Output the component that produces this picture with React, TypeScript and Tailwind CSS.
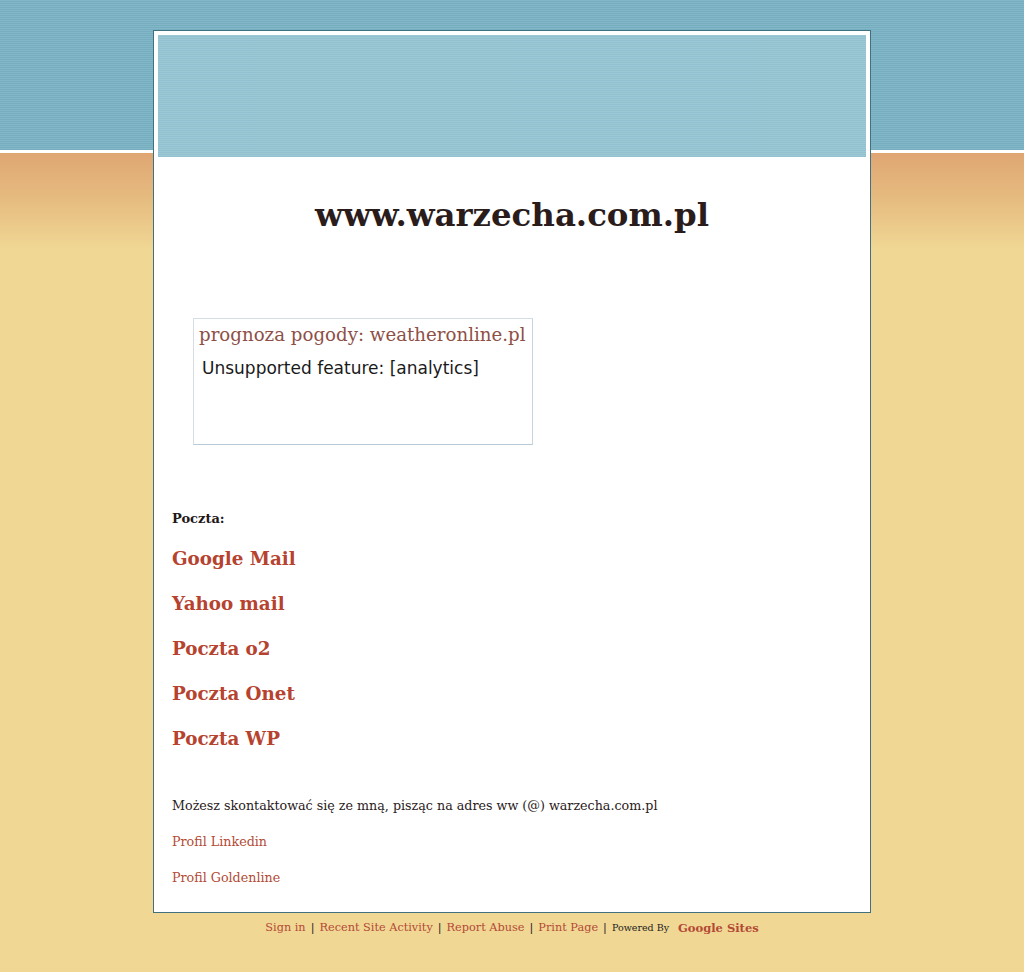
import React from "react";

const serif = { fontFamily: '"DejaVu Serif", "Liberation Serif", serif' };
const sans = { fontFamily: '"DejaVu Sans", "Liberation Sans", sans-serif' };

export default function App() {
  const mails = ["Google Mail", "Yahoo mail", "Poczta o2", "Poczta Onet", "Poczta WP"];
  return (
    <div
      className="min-h-[972px] w-full bg-[linear-gradient(to_bottom,#7ab3c5_0px,#7ab3c5_150px,#ffffff_150px,#ffffff_153px,#dfa673_153px,#e6bc80_200px,#f0d794_250px,#f0d794_100%)] pt-[30px]"
      style={serif}
    >
      <div className="relative">
        <div className="pointer-events-none absolute inset-x-0 top-[-30px] h-[150px] bg-[repeating-linear-gradient(to_bottom,rgba(255,255,255,0.06)_0px,rgba(255,255,255,0.06)_1px,rgba(0,0,0,0.03)_1px,rgba(0,0,0,0.03)_2px)]" />
        <div className="relative mx-auto w-[718px] border border-[#3f7180] bg-white px-[4px] pt-[4px]">
          <div className="h-[122px] bg-[#95c4d2] bg-[repeating-linear-gradient(to_bottom,rgba(255,255,255,0.08)_0px,rgba(255,255,255,0.08)_1px,rgba(0,0,0,0.02)_1px,rgba(0,0,0,0.02)_2px)]" />
          <h1 className="mt-[38px] text-center text-[32.4px] font-bold leading-[40px] text-[#2b1c1c]">
            www.warzecha.com.pl
          </h1>
          <div className="mt-[83px] ml-[35px] w-[340px] h-[127px] border border-[#d7dee3] border-b-[#b9cad6] border-r-[#c9d5de] px-[5px]">
            <div className="mt-[4px] whitespace-nowrap text-[18.2px] leading-[24px] text-[#8e4f47]">
              prognoza pogody: weatheronline.pl
            </div>
            <div className="mt-[11px] pl-[3px] text-[17px] leading-[20px] text-[#1a1a1a]" style={sans}>
              Unsupported feature: [analytics]
            </div>
          </div>
          <div className="px-[14px]">
            <div className="mt-[66px] text-[13px] font-bold leading-[16px] text-[#221818]">Poczta:</div>
            <div className="mt-[20px] flex flex-col gap-[21px]">
              {mails.map((m) => (
                <a key={m} className="text-[18.3px] font-bold leading-[24px] text-[#b6432f]">
                  {m}
                </a>
              ))}
            </div>
            <div className="mt-[46px] text-[12.7px] leading-[18px] text-[#2a2020]">
              Możesz skontaktować się ze mną, pisząc na adres ww (@) warzecha.com.pl
            </div>
            <div className="mt-[18px] text-[12.7px] leading-[18px] text-[#b34a36]">Profil Linkedin</div>
            <div className="mt-[18px] text-[12.7px] leading-[18px] text-[#b34a36]">Profil Goldenline</div>
            <div className="h-[25px]" />
          </div>
        </div>
        <div className="mx-auto flex w-[718px] items-center justify-center gap-[5px] pt-[7px] text-[11.3px] leading-[16px]">
          <a className="text-[#b34a36]">Sign in</a>
          <span className="text-[#222]">|</span>
          <a className="text-[#b34a36]">Recent Site Activity</a>
          <span className="text-[#222]">|</span>
          <a className="text-[#b34a36]">Report Abuse</a>
          <span className="text-[#222]">|</span>
          <a className="text-[#b34a36]">Print Page</a>
          <span className="text-[#222]">|</span>
          <span className="text-[9.5px] text-[#222]">Powered By</span>
          <a className="ml-[4px] text-[11.5px] font-bold text-[#b34a36]">Google Sites</a>
        </div>
      </div>
    </div>
  );
}
